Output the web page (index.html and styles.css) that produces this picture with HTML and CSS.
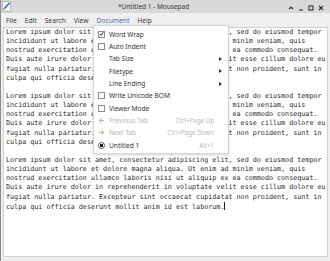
FILE: index.html
```html
<!DOCTYPE html>
<html lang="en">
<head>
    <meta charset="UTF-8">
    <title>*Untitled 1 - Mousepad</title>
    <link rel="stylesheet" href="styles.css">
</head>
<body>
    <div class="window">
        <div class="titlebar">
            <svg class="app-icon" width="9" height="11" viewBox="0 0 9 11">
                <rect x="0.5" y="0.5" width="8" height="10" fill="#f4f4f4" stroke="#9a9a9a" stroke-width="0.6"/>
                <path d="M1.5 8.5 L7.5 2" stroke="#2a6fc9" stroke-width="1.6"/>
                <path d="M1.2 9.2 L2.4 7.6" stroke="#e8c43a" stroke-width="1.6"/>
            </svg>
            <span class="title">*Untitled 1 - Mousepad</span>
            <div class="controls">
                <svg width="6" height="6" viewBox="0 0 6 6"><path d="M1 4 L3 2 L5 4" fill="none" stroke="#333" stroke-width="1.1"/></svg>
                <svg width="6" height="6" viewBox="0 0 6 6"><path d="M1 5 H5" stroke="#333" stroke-width="1.1"/></svg>
                <svg width="6" height="6" viewBox="0 0 6 6"><rect x="1" y="1" width="4" height="4" fill="none" stroke="#333" stroke-width="1.1"/></svg>
                <svg width="6" height="6" viewBox="0 0 6 6"><path d="M1 1 L5 5 M5 1 L1 5" stroke="#333" stroke-width="1.1"/></svg>
            </div>
        </div>

        <div class="menubar">
            <span class="menubar-item">File</span>
            <span class="menubar-item">Edit</span>
            <span class="menubar-item">Search</span>
            <span class="menubar-item">View</span>
            <span class="menubar-item open">Document</span>
            <span class="menubar-item">Help</span>
        </div>

        <div class="editor">
<pre class="text">Lorem ipsum dolor sit amet, consectetur adipiscing elit, sed do eiusmod tempor
incididunt ut labore et dolore magna aliqua. Ut enim ad minim veniam, quis
nostrud exercitation ullamco laboris nisi ut aliquip ex ea commodo consequat.
Duis aute irure dolor in reprehenderit in voluptate velit esse cillum dolore eu
fugiat nulla pariatur. Excepteur sint occaecat cupidatat non proident, sunt in
culpa qui officia deserunt mollit anim id est laborum.

Lorem ipsum dolor sit amet, consectetur adipiscing elit, sed do eiusmod tempor
incididunt ut labore et dolore magna aliqua. Ut enim ad minim veniam, quis
nostrud exercitation ullamco laboris nisi ut aliquip ex ea commodo consequat.
Duis aute irure dolor in reprehenderit in voluptate velit esse cillum dolore eu
fugiat nulla pariatur. Excepteur sint occaecat cupidatat non proident, sunt in
culpa qui officia deserunt mollit anim id est laborum.

Lorem ipsum dolor sit amet, consectetur adipiscing elit, sed do eiusmod tempor
incididunt ut labore et dolore magna aliqua. Ut enim ad minim veniam, quis
nostrud exercitation ullamco laboris nisi ut aliquip ex ea commodo consequat.
Duis aute irure dolor in reprehenderit in voluptate velit esse cillum dolore eu
fugiat nulla pariatur. Excepteur sint occaecat cupidatat non proident, sunt in
culpa qui officia deserunt mollit anim id est laborum.<span class="cursor"></span></pre>
        </div>

        <!-- Document menu, open over the editor -->
        <div class="menu">
            <div class="menu-item"><span class="check checked"><svg width="6" height="6" viewBox="0 0 6 6"><path d="M1 3 L2.5 4.6 L5.2 1" fill="none" stroke="#222" stroke-width="1.2"/></svg></span><span class="label">Word Wrap</span></div>
            <div class="menu-item"><span class="check"></span><span class="label">Auto Indent</span></div>
            <div class="menu-item"><span class="slot"></span><span class="label">Tab Size</span><span class="arrow"></span></div>
            <div class="menu-item"><span class="slot"></span><span class="label">Filetype</span><span class="arrow"></span></div>
            <div class="menu-item"><span class="slot"></span><span class="label">Line Ending</span><span class="arrow"></span></div>
            <div class="menu-item"><span class="check"></span><span class="label">Write Unicode BOM</span></div>
            <div class="menu-item"><span class="check"></span><span class="label">Viewer Mode</span></div>
            <div class="menu-item disabled"><span class="slot"><svg width="7" height="7" viewBox="0 0 7 7"><path d="M6 3.5 H1.5 M3.5 1.5 L1.5 3.5 L3.5 5.5" fill="none" stroke="#9fd08a" stroke-width="1.2"/></svg></span><span class="label">Previous Tab</span><span class="accel">Ctrl+Page Up</span></div>
            <div class="menu-item disabled"><span class="slot"><svg width="7" height="7" viewBox="0 0 7 7"><path d="M1 3.5 H5.5 M3.5 1.5 L5.5 3.5 L3.5 5.5" fill="none" stroke="#9fd08a" stroke-width="1.2"/></svg></span><span class="label">Next Tab</span><span class="accel">Ctrl+Page Down</span></div>
            <div class="menu-item"><span class="radio"></span><span class="label">Untitled 1</span><span class="accel">Alt+1</span></div>
        </div>
    </div>
</body>
</html>
```

FILE: styles.css
```css
body {
    margin: 0;
    padding: 0;
    font-family: "Noto Sans", "DejaVu Sans", sans-serif;
    color: #333;
}

.window {
    position: relative;
    width: 330px;
    height: 261px;
    display: flex;
    flex-direction: column;
    background-color: #efefef;
    border-left: 1px solid #8a8a8a;
    box-sizing: border-box;
}

.titlebar {
    height: 13px;
    background-color: #d8d8d8;
    display: flex;
    align-items: center;
    position: relative;
    padding-left: 1px;
}

.app-icon {
    display: block;
}

.title {
    position: absolute;
    left: 117px;
    top: 2px;
    font-size: 6.5px;
    color: #3a3a3a;
}

.controls {
    margin-left: auto;
    display: flex;
    gap: 4px;
    padding-right: 6px;
    padding-top: 2px;
}

.controls svg {
    display: block;
}

.menubar {
    height: 14px;
    display: flex;
    align-items: center;
    padding-left: 1px;
}

.menubar-item {
    font-size: 6.7px;
    padding: 0 4px;
    color: #3a3a3a;
    position: relative;
}

.menubar-item.open {
    color: #4a72b8;
}

.menubar-item.open::after {
    content: "";
    position: absolute;
    left: 4px;
    right: 4px;
    bottom: -3px;
    height: 1px;
    background-color: #4a72b8;
}

.editor {
    flex: 1;
    margin: 0 2px 4px 2px;
    background-color: #fff;
    border: 1px solid #d0d0d0;
    overflow: hidden;
}

.text {
    margin: 0;
    padding: 0 0 0 2px;
    font-family: "DejaVu Sans Mono", monospace;
    font-size: 6.73px;
    line-height: 9.14px;
    color: #2a2a2a;
}

.cursor {
    display: inline-block;
    width: 0.6px;
    height: 8px;
    background-color: #222;
    vertical-align: -1.5px;
}

.menu {
    position: absolute;
    left: 92px;
    top: 25px;
    width: 136px;
    padding: 2px 0;
    background-color: #fff;
    border: 1px solid #d6d6d6;
    box-shadow: 0 1px 3px rgba(0, 0, 0, 0.18);
    box-sizing: border-box;
}

.menu-item {
    height: 12.35px;
    display: flex;
    align-items: center;
    padding: 0 6px 0 4px;
    font-size: 6.6px;
    color: #333;
}

.menu-item.disabled {
    color: #b5b5b5;
}

.check, .slot, .radio {
    width: 7px;
    height: 7px;
    box-sizing: border-box;
    margin-right: 4px;
    display: flex;
    align-items: center;
    justify-content: center;
    flex-shrink: 0;
}

.check {
    border: 1px solid #8c8c8c;
    background-color: #fff;
}

.radio {
    border: 1px solid #555;
    border-radius: 50%;
    background: radial-gradient(circle, #222 0 1.6px, #fff 2px);
}

.label {
    flex: 1;
}

.accel {
    font-size: 6.2px;
    color: #b8b8b8;
    margin-right: 8px;
}

.arrow {
    width: 0;
    height: 0;
    border-top: 2.5px solid transparent;
    border-bottom: 2.5px solid transparent;
    border-left: 3px solid #333;
}
```
